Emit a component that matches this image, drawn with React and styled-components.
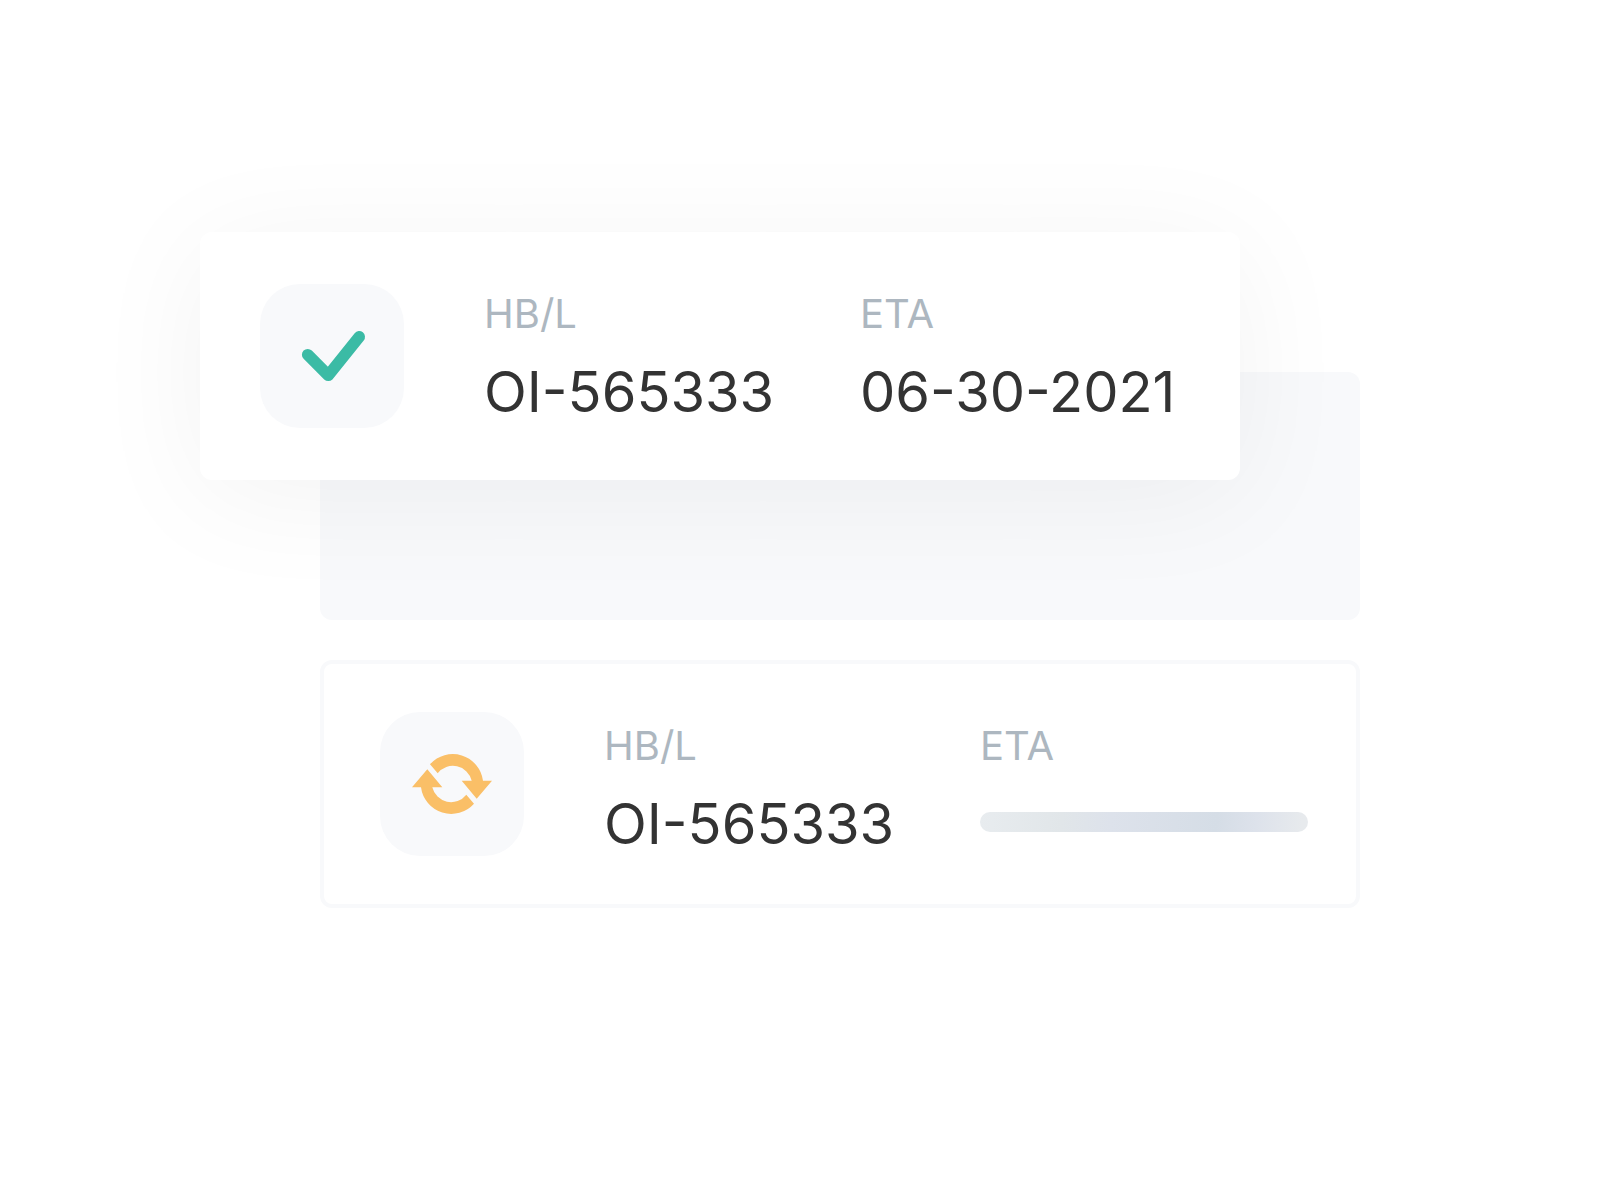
import styled, { createGlobalStyle } from 'styled-components';

const GlobalStyle = createGlobalStyle`
  * {
    box-sizing: border-box;
  }

  body {
    margin: 0;
    background: #ffffff;
    color: #333333;
    font-family: Inter, "Liberation Sans", sans-serif;
  }
`;

const Page = styled.main`
  min-height: 100vh;
  padding: 232px 240px 80px 200px;
`;

// The raised card and the empty slot share the middle row and column
const Board = styled.div`
  display: grid;
  grid-template-columns: 120px minmax(0, 1fr) 120px;
  grid-template-rows: 140px 108px 140px auto;
`;

const Slot = styled.div`
  grid-column: 2 / 4;
  grid-row: 2 / 4;
  background: #f8f9fb;
  border-radius: 12px;
`;

const Card = styled.article`
  display: grid;
  grid-template-columns: 144px 296px minmax(0, 1fr);
  column-gap: 80px;
  align-items: start;
  border-radius: 12px;
`;

const RaisedCard = styled(Card)`
  z-index: 1;
  grid-column: 1 / 3;
  grid-row: 1 / 3;
  padding: 52px 52px 52px 60px;
  background: #ffffff;
  box-shadow: 0 16px 120px rgba(0, 0, 0, 0.05);
`;

const OutlinedCard = styled(Card)`
  grid-column: 2 / 4;
  grid-row: 4;
  margin-top: 40px;
  padding: 48px 48px 48px 56px;
  border: 4px solid #f8f9fb;
`;

const Tile = styled.div`
  height: 144px;
  border-radius: 40px;
  background: #f8f9fb;

  svg {
    display: block;
  }
`;

const Field = styled.div`
  padding-top: ${props => (props.$low ? '10px' : '6px')};
  white-space: nowrap;
`;

const Label = styled.div`
  color: #adb7c0;
  font-size: 40px;
  line-height: 48px;
`;

const Value = styled.div`
  margin-top: 22px;
  font-size: 56px;
  line-height: 64px;
`;

const LoadingBar = styled.div`
  height: 20px;
  margin-top: 42px;
  border-radius: 10px;
  background: linear-gradient(
    95deg,
    #e8ecef 0%,
    #e1e6e9 25%,
    #dde2eb 40%,
    #d5dde6 72%,
    #dde2eb 84%,
    #e7eaed 98%
  );
`;

const CheckIcon = () => (
    <svg width="144" height="144" viewBox="0 0 144 144" fill="none" aria-hidden="true">
        <path
            d="M47.7 70.7L68.3 91.3L99.2 52.8"
            stroke="#3bbba5"
            strokeWidth="11.6"
            strokeLinecap="round"
            strokeLinejoin="round"
        />
    </svg>
);

const ARROW = "M50 52.3A30.5 30.5 0 0 1 103 68.7H112L96.7 86.7L81.7 68.7H91.7A19.3 19.3 0 0 0 57.7 61.3Z";

const SyncIcon = () => (
    <svg width="144" height="144" viewBox="0 0 144 144" fill="#fabf67" aria-hidden="true">
        <path d={ARROW} />
        <path d={ARROW} transform="rotate(180 72 72)" />
    </svg>
);

const App = () => {
    return (
        <>
            <GlobalStyle />
            <Page>
                <Board>
                    <RaisedCard>
                        <Tile><CheckIcon /></Tile>
                        <Field>
                            <Label>HB/L</Label>
                            <Value>OI-565333</Value>
                        </Field>
                        <Field>
                            <Label>ETA</Label>
                            <Value>06-30-2021</Value>
                        </Field>
                    </RaisedCard>

                    <Slot />

                    <OutlinedCard>
                        <Tile><SyncIcon /></Tile>
                        <Field $low>
                            <Label>HB/L</Label>
                            <Value>OI-565333</Value>
                        </Field>
                        <Field $low>
                            <Label>ETA</Label>
                            <LoadingBar role="progressbar" aria-label="ETA" />
                        </Field>
                    </OutlinedCard>
                </Board>
            </Page>
        </>
    );
};

export default App;
